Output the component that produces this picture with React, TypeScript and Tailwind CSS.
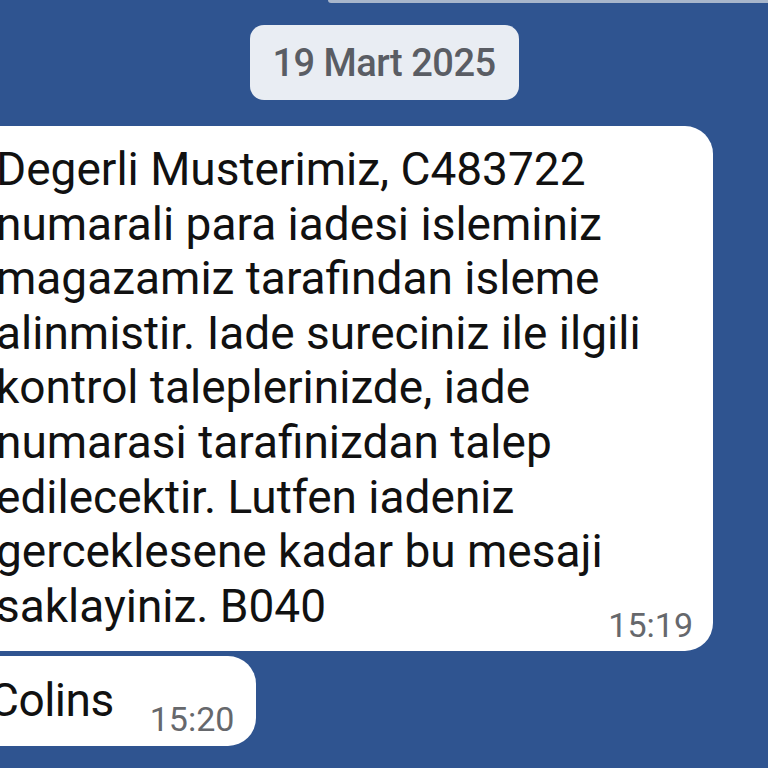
const LINES = [
  'Degerli Musterimiz, C483722',
  'numarali para iadesi isleminiz',
  'magazamiz tarafindan isleme',
  'alinmistir. Iade sureciniz ile ilgili',
  'kontrol taleplerinizde, iade',
  'numarasi tarafinizdan talep',
  'edilecektir. Lutfen iadeniz',
  'gerceklesene kadar bu mesaji',
];

export default function App() {
  return (
    <div
      className="w-[768px] h-[768px] overflow-hidden bg-[#2f5490] flex flex-col"
      style={{ fontFamily: 'Roboto, "Noto Sans", sans-serif' }}
    >
      {/* Previous bubble edge */}
      <div className="ml-[328px] h-[3px] bg-[#a8b6cb] rounded-bl-[4px]" />

      {/* Date chip */}
      <div className="mt-[22px] self-center h-[75px] w-[269px] rounded-[14px] bg-[#e9edf3] flex items-center justify-center">
        <span className="text-[38px] leading-none font-medium text-[#5a5d64] tracking-[-0.5px]">19 Mart 2025</span>
      </div>

      {/* Incoming message */}
      <div className="mt-[26px] ml-[-40px] w-[753px] rounded-[28px] bg-white pl-[36px] pr-[20px] pt-[16px] pb-[18px] text-[46px] leading-[54.6px] text-[#111]">
        {LINES.map((l) => (
          <div key={l} className="whitespace-nowrap">{l}</div>
        ))}
        <div className="flex items-end justify-between">
          <span className="whitespace-nowrap">saklayiniz. B040</span>
          <span className="text-[34px] leading-[40px] text-[#66686c] translate-y-[12px]">15:19</span>
        </div>
      </div>

      {/* Reply */}
      <div className="mt-[5px] ml-[-40px] self-start rounded-[28px] bg-white pl-[29px] pr-[22px] pt-[17px] pb-[18px] flex items-end gap-[36px]">
        <span className="text-[46px] leading-[54.6px] text-[#111] tracking-[-0.5px]">Colins</span>
        <span className="text-[34px] leading-[40px] text-[#66686c] translate-y-[11px]">15:20</span>
      </div>
    </div>
  );
}
